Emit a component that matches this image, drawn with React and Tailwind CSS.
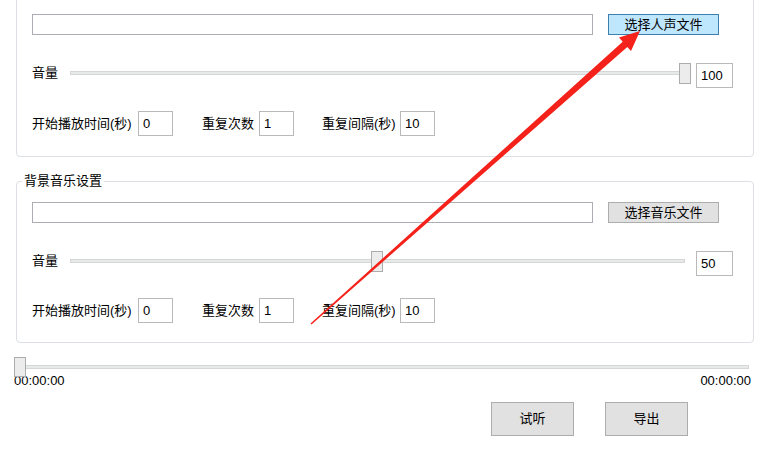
import React from 'react';

const font = { fontFamily: '"Liberation Sans", "Noto Sans CJK SC", sans-serif' };

function Slider({ width, thumbLeft }) {
  return (
    <div className="relative h-[21px] shrink-0" style={{ width }}>
      <div className="absolute left-0 right-[6px] top-[8px] h-[4px] bg-[#e7eaea] border border-[#d6d6d6]" />
      <div
        className="absolute top-0 w-[12px] h-[21px] bg-[#ececec] border border-[#acacac]"
        style={{ left: thumbLeft }}
      />
    </div>
  );
}

function Box({ value, w = 'w-[35px]' }) {
  return (
    <div className={`${w} h-[25px] border border-[#b9b9b9] bg-white px-[4px] text-[13px] leading-[23px] text-black shrink-0`}>
      {value}
    </div>
  );
}

function Button({ children, blue }) {
  return (
    <button
      className={`w-[111px] h-[21px] border text-[13px] leading-[19px] text-black ${
        blue ? 'bg-[#bee6fd] border-[#3c7fb1]' : 'bg-[#e1e1e1] border-[#adadad]'
      }`}
    >
      {children}
    </button>
  );
}

function GroupContent({ buttonLabel, blue, thumbLeft, volume, row2Top, row3Top }) {
  return (
    <>
      <div className="flex gap-[15px]">
        <div className="w-[561px] h-[21px] border border-[#abadb3] bg-white" />
        <Button blue={blue}>{buttonLabel}</Button>
      </div>
      <div className={`flex items-start ${row2Top}`}>
        <span className="w-[38px] mt-[1px] text-[13px] leading-[17px]">音量</span>
        <Slider width={621} thumbLeft={thumbLeft} />
        <div className="ml-[5px]">
          <Box value={volume} w="w-[37px]" />
        </div>
      </div>
      <div className={`flex items-center text-[13px] ${row3Top}`}>
        <span className="w-[106px]">开始播放时间(秒)</span>
        <Box value="0" />
        <span className="ml-[29px] w-[57px]">重复次数</span>
        <Box value="1" />
        <span className="ml-[28px] w-[78px]">重复间隔(秒)</span>
        <Box value="10" />
      </div>
    </>
  );
}

export default function App() {
  return (
    <div className="relative w-[763px] h-[456px] overflow-hidden bg-white text-black" style={font}>
      {/* 人声设置 (top cut off) */}
      <div className="ml-[16px] w-[738px] -mt-[10px] border border-[#dcdfe4] rounded-[4px] pl-[15px] pt-[23px] pb-[20px]">
        <GroupContent buttonLabel="选择人声文件" blue thumbLeft={609} volume="100" row2Top="mt-[28px]" row3Top="mt-[23px]" />
      </div>

      {/* 背景音乐设置 */}
      <div className="relative ml-[16px] w-[738px] mt-[24px] border border-[#dcdfe4] rounded-[4px] pl-[15px] pt-[20px] pb-[19px]">
        <span className="absolute left-[5px] top-[-10px] bg-white px-[2px] text-[13px] leading-[17px]">背景音乐设置</span>
        <GroupContent buttonLabel="选择音乐文件" thumbLeft={301} volume="50" row2Top="mt-[28px]" row3Top="mt-[22px]" />
      </div>

      {/* 进度条 */}
      <div className="relative ml-[14px] w-[735px] h-[20px] mt-[14px]">
        <div className="absolute left-0 right-0 top-[8px] h-[4px] bg-[#e7eaea] border border-[#d6d6d6]" />
        <div className="absolute left-0 top-0 w-[12px] h-[20px] bg-[#ececec] border border-[#acacac]" />
      </div>
      <div className="flex justify-between ml-[14px] w-[737px] -mt-[5px] text-[13px] leading-[17px]">
        <span>00:00:00</span>
        <span>00:00:00</span>
      </div>

      <div className="flex justify-end gap-[31px] pr-[75px] mt-[13px]">
        <button className="w-[83px] h-[34px] bg-[#e1e1e1] border border-[#adadad] text-[13px]">试听</button>
        <button className="w-[83px] h-[34px] bg-[#e1e1e1] border border-[#adadad] text-[13px]">导出</button>
      </div>

      {/* 红色箭头标注 */}
      <svg className="absolute inset-0 pointer-events-none" width="763" height="456" viewBox="0 0 763 456">
        <polygon
          points="311.5,324.5 627.3,46.9 631,51 640,31 619,37.6 622.7,41.7 310.5,323.5"
          fill="#f5221b"
        />
      </svg>
    </div>
  );
}
